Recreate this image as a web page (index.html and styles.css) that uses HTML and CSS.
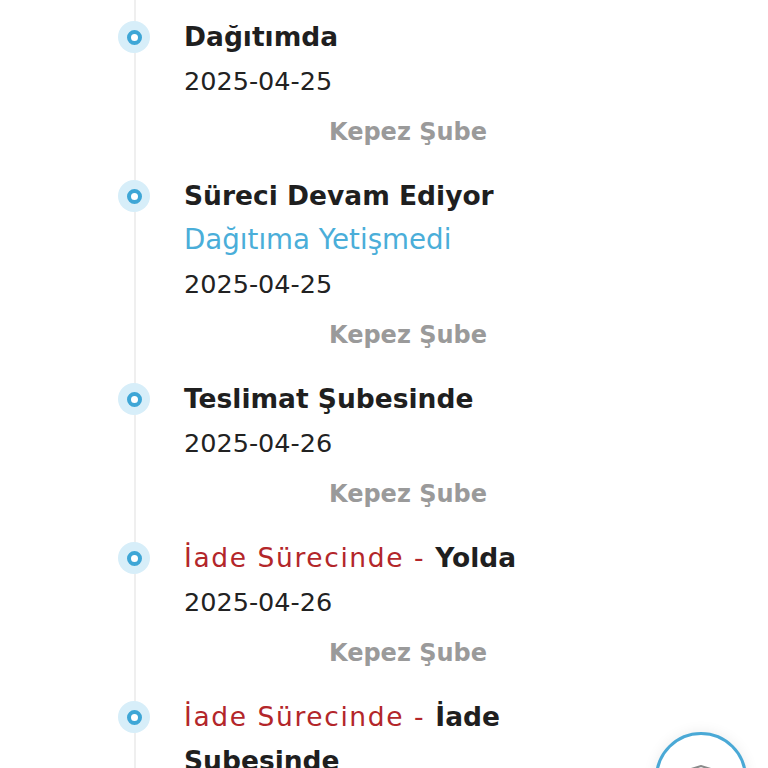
FILE: index.html
```html
<!DOCTYPE html>
<html lang="tr">
<head>
  <meta charset="UTF-8" />
  <meta name="viewport" content="width=device-width, initial-scale=1.0"/>
  <title>Kargo Takip - Hareketler</title>
  <link rel="stylesheet" href="styles.css">
</head>
<body>

  <ul class="timeline">
    <li class="step">
      <span class="dot"></span>
      <div class="info">
        <div class="title">Dağıtımda</div>
        <div class="date">2025-04-25</div>
        <div class="branch">Kepez Şube</div>
      </div>
    </li>

    <li class="step">
      <span class="dot"></span>
      <div class="info">
        <div class="title">Süreci Devam Ediyor</div>
        <div class="note">Dağıtıma Yetişmedi</div>
        <div class="date">2025-04-25</div>
        <div class="branch">Kepez Şube</div>
      </div>
    </li>

    <li class="step">
      <span class="dot"></span>
      <div class="info">
        <div class="title">Teslimat Şubesinde</div>
        <div class="date">2025-04-26</div>
        <div class="branch">Kepez Şube</div>
      </div>
    </li>

    <li class="step">
      <span class="dot"></span>
      <div class="info">
        <div class="title"><span class="return">İade Sürecinde - </span>Yolda</div>
        <div class="date">2025-04-26</div>
        <div class="branch">Kepez Şube</div>
      </div>
    </li>

    <li class="step">
      <span class="dot"></span>
      <div class="info">
        <div class="title"><span class="return">İade Sürecinde - </span>İade Şubesinde</div>
      </div>
    </li>
  </ul>

  <!-- floating help button -->
  <button class="fab" type="button" aria-label="Yardım">
    <svg width="30" height="30" viewBox="0 0 30 30" fill="none" stroke="#8a8a8a" stroke-width="2" stroke-linecap="round">
      <path d="M2 5 L15 1 L28 5"/>
    </svg>
  </button>

</body>
</html>
```

FILE: styles.css
```css
  body {
    font-family: 'DejaVu Sans', 'Noto Sans', sans-serif;
    background-color: #ffffff;
    color: #1f1f1f;
    margin: 0;
    height: 768px;
    overflow: hidden;
  }

  .timeline {
    list-style: none;
    margin: 0;
    padding: 15px 0 0 118px;
    position: relative;
  }

  /* vertical line behind the dots */
  .timeline::before {
    content: "";
    position: absolute;
    top: 0;
    bottom: -200px;
    left: 134px;
    width: 2px;
    background-color: #efefef;
  }

  .step {
    display: grid;
    grid-template-columns: 32px 448px;
    column-gap: 34px;
    padding-bottom: 20px;
    position: relative;
  }

  .dot {
    width: 32px;
    height: 32px;
    margin-top: 6px;
    border-radius: 50%;
    background-color: #d7eef9;
    display: flex;
    align-items: center;
    justify-content: center;
  }

  .dot::after {
    content: "";
    width: 7px;
    height: 7px;
    border-radius: 50%;
    border: 4px solid #3ea6d6;
    background-color: #fff;
  }

  .title {
    font-size: 26.5px;
    font-weight: bold;
    line-height: 44px;
    color: #1f1f1f;
    padding-right: 20px;
  }

  .return {
    color: #b3262a;
    font-weight: normal;
    letter-spacing: 1.6px;
  }

  .note {
    font-size: 27.7px;
    line-height: 44px;
    color: #4aaed9;
  }

  .date {
    font-size: 25.5px;
    line-height: 44px;
    color: #222;
  }

  .branch {
    margin-top: 7px;
    font-size: 24px;
    font-weight: bold;
    line-height: 44px;
    color: #9a9a9a;
    text-align: center;
  }

  .fab {
    position: fixed;
    right: 21px;
    bottom: -56px;
    width: 92px;
    height: 92px;
    border-radius: 50%;
    border: 3px solid #4aa9d6;
    background-color: #fff;
    box-shadow: 0 0 14px rgba(0, 0, 0, 0.08);
    padding: 30px 0 0 0;
    display: flex;
    justify-content: center;
    align-items: flex-start;
  }
```
